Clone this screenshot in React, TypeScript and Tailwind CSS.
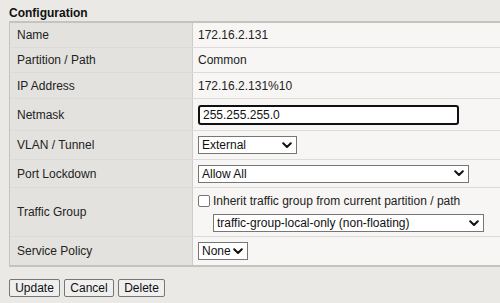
import React from "react";

const Chevron = () => (
  <svg width="10" height="7" viewBox="0 0 10 7" className="shrink-0">
    <path d="M1.2 1.2 L5 5 L8.8 1.2" fill="none" stroke="#111" strokeWidth="2" strokeLinecap="round" strokeLinejoin="round" />
  </svg>
);

function Select({ value, w }: { value: string; w: string }) {
  return (
    <div className={`${w} h-[18px] bg-white border border-[#767676] flex items-center justify-between pl-[3px] pr-[4px] text-[12px] text-[#111]`}>
      <span>{value}</span>
      <Chevron />
    </div>
  );
}

function Row({ label, h, last, children }: { label: string; h: string; last?: boolean; children: React.ReactNode }) {
  return (
    <div className={`flex ${h} ${last ? "" : "border-b border-[#dddbd8]"}`}>
      <div className="w-[183px] shrink-0 bg-[#e4e2df] border-r border-[#cfcdca] flex items-center pl-[7px] text-[#222]">
        {label}
      </div>
      <div className="flex-1 bg-[#f7f6f4] flex items-center pl-[5px] text-[#222]">{children}</div>
    </div>
  );
}

export default function App() {
  return (
    <div
      className="w-[500px] h-[303px] bg-[#ebe9e6] overflow-hidden text-[12px]"
      style={{ fontFamily: '"Liberation Sans", Arial, sans-serif' }}
    >
      <div className="pl-[9px] pt-[4px] h-[21px] font-bold text-[#111]">Configuration</div>
      <div className="ml-[9px] border-t-2 border-b-2 border-l border-[#c4c3c0]">
        <Row label="Name" h="h-[25px]">172.16.2.131</Row>
        <Row label="Partition / Path" h="h-[25px]">Common</Row>
        <Row label="IP Address" h="h-[26px]">172.16.2.131%10</Row>
        <Row label="Netmask" h="h-[32px]">
          <div className="w-[261px] h-[20px] bg-white border-2 border-[#111] rounded-[3px] flex items-center pl-[3px] text-[#111]">
            255.255.255.0
          </div>
        </Row>
        <Row label="VLAN / Tunnel" h="h-[29px]">
          <Select value="External" w="w-[99px]" />
        </Row>
        <Row label="Port Lockdown" h="h-[28px]">
          <Select value="Allow All" w="w-[271px]" />
        </Row>
        <Row label="Traffic Group" h="h-[49px]">
          <div className="flex flex-col gap-[4px]">
            <div className="flex items-center gap-[3px]">
              <div className="w-[12px] h-[12px] bg-white border border-[#767676] rounded-[2px]" />
              <span>Inherit traffic group from current partition / path</span>
            </div>
            <div className="pl-[15px]">
              <Select value="traffic-group-local-only (non-floating)" w="w-[271px]" />
            </div>
          </div>
        </Row>
        <Row label="Service Policy" h="h-[28px]" last>
          <Select value="None" w="w-[50px]" />
        </Row>
      </div>
      <div className="flex gap-[4px] pl-[9px] pt-[12px]">
        {[
          ["Update", "w-[51px]"],
          ["Cancel", "w-[50px]"],
          ["Delete", "w-[47px]"],
        ].map(([b, w]) => (
          <div
            key={b}
            className={`${w} h-[18px] bg-[#efefef] border border-[#767676] rounded-[2px] flex items-center justify-center text-[#111]`}
          >
            {b}
          </div>
        ))}
      </div>
    </div>
  );
}
